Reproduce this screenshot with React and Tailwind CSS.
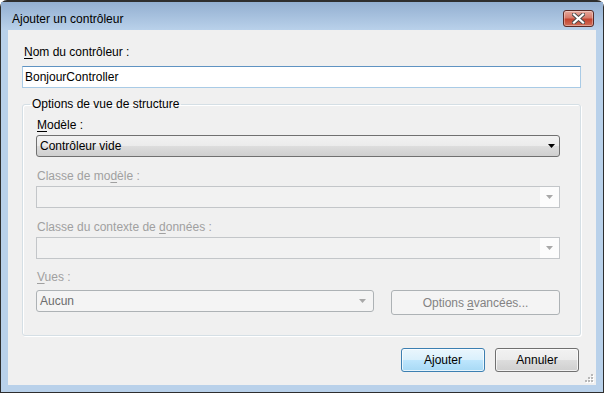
import React from 'react';

const grayBtn = 'bg-[linear-gradient(#f2f2f2,#ebebeb_50%,#dddddd_50%,#cfcfcf)]';

function Arrow({ color = '#000' }) {
  return (
    <svg width="7" height="4" viewBox="0 0 7 4">
      <polygon points="0,0 7,0 3.5,4" fill={color} />
    </svg>
  );
}

function Label({ children, disabled, className = '' }) {
  return (
    <div
      className={`h-[16px] leading-[16px] ${disabled ? 'text-[#a0a0a0]' : 'text-black'} ${className}`}
    >
      {children}
    </div>
  );
}

function DisabledCombo() {
  return (
    <div className="flex h-[22px] w-[524px] border border-[#c3c6c9] bg-[#f2f2f2]">
      <div className="flex-1" />
      <div className="flex w-[19px] items-center justify-center bg-[#fcfcfc]">
        <Arrow color="#a8a8a8" />
      </div>
    </div>
  );
}

export default function App() {
  return (
    <div className="h-[393px] w-[604px] overflow-hidden font-['Liberation_Sans',Arial,sans-serif] text-[12px] text-black">
      <div className="flex h-full flex-col rounded-t-[7px] border border-t-2 border-[#2e2e2e] bg-[#b9d1ea]">
        {/* title bar */}
        <div className="flex h-[28px] items-start justify-between bg-[linear-gradient(#93afd1,#b9d1ea)] pl-[11px] pr-[9px]">
          <span className="pt-[9px] leading-[16px]">Ajouter un contrôleur</span>
          <button className="mt-[8px] flex h-[17px] w-[31px] items-center justify-center rounded-[3px] border border-[#5a2a26] bg-[linear-gradient(#e6a99d,#d77b6b_45%,#c4432f_55%,#d0705a)] shadow-[inset_0_0_0_1px_rgba(255,255,255,0.35)]">
            <svg width="13" height="11" viewBox="0 0 13 11">
              <path d="M2 1.5 L11 9.5 M11 1.5 L2 9.5" stroke="#4a4a4a" strokeWidth="4" strokeLinecap="square" />
              <path d="M2 1.5 L11 9.5 M11 1.5 L2 9.5" stroke="#ffffff" strokeWidth="2.2" strokeLinecap="square" />
            </svg>
          </button>
        </div>

        {/* client area */}
        <div className="relative ml-[7px] flex h-[355px] w-[588px] flex-col bg-[#f0f0f0] px-[14px] pt-[14px]">
          <Label className="pl-[2px]">
            <u className="underline-offset-2">N</u>om du contrôleur :
          </Label>
          <div className="mt-[6px] flex h-[22px] w-[559px] items-center border border-[#a9cbe6] border-t-[#5f93c2] bg-white pl-[2px]">
            BonjourController
          </div>

          <fieldset className="mt-[8px] h-[240px] w-[559px] rounded-[3px] border border-[#d5dfe5] pb-[19px] pl-[13px] pr-[20px] shadow-[inset_1px_1px_0_#fff,1px_1px_0_#fff]">
            <legend className="-ml-[6px] px-[2px] leading-[16px]">Options de vue de structure</legend>

            <Label className="mt-[5px] pl-[1px]">
              <u className="underline-offset-2">M</u>odèle :
            </Label>
            <div className={`mt-[2px] flex h-[22px] w-[524px] items-center justify-between rounded-[3px] border border-[#707070] pl-[3px] pr-[4px] ${grayBtn}`}>
              <span>Contrôleur vide</span>
              <Arrow />
            </div>

            <Label disabled className="mt-[11px] pl-[1px]">
              Classe de mo<u className="underline-offset-2">d</u>èle :
            </Label>
            <div className="mt-[2px]">
              <DisabledCombo />
            </div>

            <Label disabled className="mt-[11px] pl-[1px]">
              Classe du contexte de <u className="underline-offset-2">d</u>onnées :
            </Label>
            <div className="mt-[2px]">
              <DisabledCombo />
            </div>

            <Label disabled className="mt-[10px] pl-[1px]">
              <u className="underline-offset-2">V</u>ues :
            </Label>
            <div className="mt-[5px] flex items-start justify-between">
              <div className="flex h-[22px] w-[338px] items-center justify-between rounded-[3px] border border-[#adb2b5] bg-[#f4f4f4] pl-[3px] pr-[7px] text-[#6d6d6d]">
                <span>Aucun</span>
                <Arrow color="#a8a8a8" />
              </div>
              <button className="flex h-[25px] w-[169px] items-center justify-center rounded-[3px] border border-[#adb2b5] bg-[#f4f4f4] text-[#838383]">
                Options <u className="ml-[3px] underline-offset-2">a</u>vancées...
              </button>
            </div>
          </fieldset>

          <div className="mt-[12px] flex justify-end gap-[10px] pr-[3px]">
            <button className="h-[24px] w-[84px] rounded-[3px] border border-[#3c7fb1] bg-[linear-gradient(#eaf6fd,#d9f0fc_50%,#bee6fd_50%,#a7d9f5)] shadow-[inset_0_0_0_1px_rgba(255,255,255,0.7)]">
              Ajouter
            </button>
            <button className={`h-[24px] w-[84px] rounded-[3px] border border-[#707070] shadow-[inset_0_0_0_1px_rgba(255,255,255,0.7)] ${grayBtn}`}>
              Annuler
            </button>
          </div>

          {/* size grip */}
          <svg className="absolute bottom-[2px] right-[2px]" width="10" height="10" viewBox="0 0 10 10">
            {[
              [7, 1],
              [4, 4],
              [7, 4],
              [1, 7],
              [4, 7],
              [7, 7],
            ].map(([x, y]) => (
              <g key={`${x}-${y}`}>
                <rect x={x + 1} y={y + 1} width="2" height="2" fill="#ffffff" />
                <rect x={x} y={y} width="2" height="2" fill="#b8b8b8" />
              </g>
            ))}
          </svg>
        </div>
      </div>
    </div>
  );
}
